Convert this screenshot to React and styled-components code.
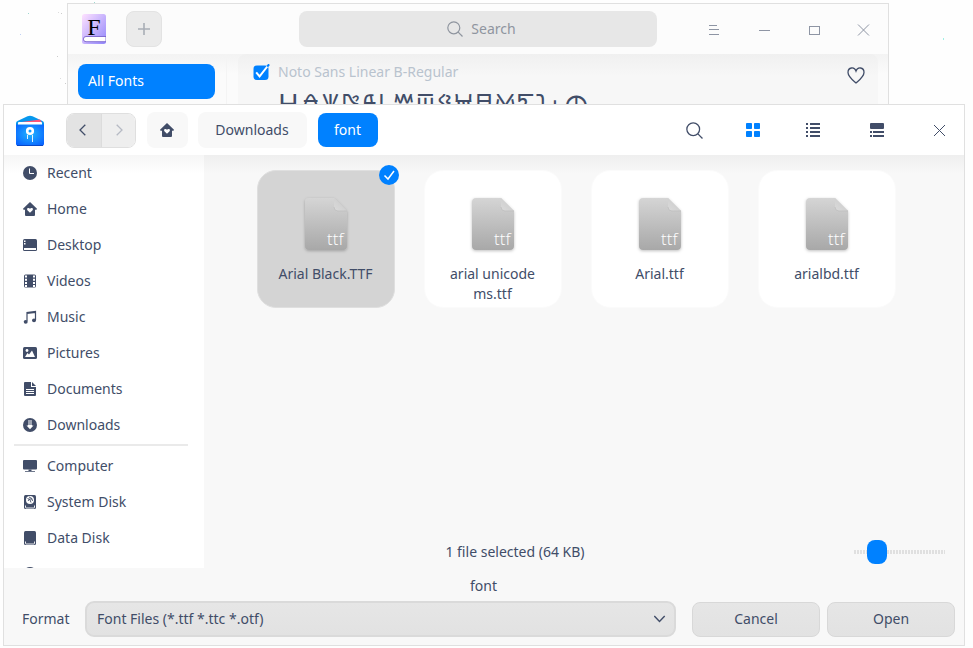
import React from "react";
import styled, { createGlobalStyle, css } from "styled-components";

const ink = "#414d68";
const blue = "#0081ff";

const GlobalStyle = createGlobalStyle`
  * { box-sizing: border-box; }
  body { margin: 0; background: #fff; overflow: hidden; }
  button { font: inherit; color: inherit; border: 0; padding: 0; background: none; }
  svg { display: block; flex: none; }
`;

const Desktop = styled.div`
  position: relative;
  width: 973px;
  height: 648px;
  overflow: hidden;
  background: #fefefe;
  font: 14px/20px "Noto Sans", "Open Sans", sans-serif;
  color: ${ink};
`;

const Specks = styled.svg`
  position: absolute;
  inset: 0;
`;

const Window = styled.section`
  position: absolute;
  display: flex;
  flex-direction: column;
  border: 1px solid #e0e0e0;
`;

const ManagerWindow = styled(Window)`
  left: 67px;
  top: 3px;
  width: 822px;
  height: 200px;
  background: #fbfbfb;
`;

const ManagerBar = styled.header`
  display: flex;
  align-items: center;
  height: 50px;
  padding: 0 16px 0 14px;
  background: #fcfcfc;
`;

const AddButton = styled.button`
  display: grid;
  place-items: center;
  width: 36px;
  height: 36px;
  margin-left: 20px;
  border: 1px solid #e3e3e3;
  border-radius: 8px;
  background: #ebebeb;
`;

const SearchBox = styled.div`
  display: flex;
  align-items: center;
  justify-content: center;
  gap: 8px;
  width: 358px;
  height: 36px;
  margin-left: 137px;
  padding-left: 7px;
  border-radius: 8px;
  background: #e7e7e7;
  color: #8f959f;
`;

const WindowControls = styled.div`
  display: flex;
  gap: 34px;
  margin: 2px 0 0 auto;
`;

const ManagerBody = styled.div`
  display: flex;
  flex: 1;
  min-height: 0;
  background: linear-gradient(#f3f3f3, #fbfbfb 20px);
`;

const ManagerNav = styled.nav`
  width: 159px;
  padding: 10px 11px 0 10px;
  border-right: 1px solid #f4f4f4;
`;

const NavItem = styled.div`
  height: 35px;
  padding: 0 10px;
  border-radius: 8px;
  background: ${blue};
  color: #fff;
  line-height: 34px;
`;

const FontList = styled.div`
  flex: 1;
  margin: 0 10px 0 11px;
  padding: 8px 13px 0 15px;
  border-radius: 8px;
  background: linear-gradient(#f0f0f0, #f7f7f7 22px);
`;

const FontHeading = styled.div`
  display: flex;
  align-items: center;
  gap: 8px;
  height: 20px;
  color: #b9c3ce;
  svg:last-child { margin: 7px 0 0 auto; }
`;

const Specimen = styled.div`
  height: 40px;
  margin-top: 12px;
  padding-left: 25px;
  overflow: hidden;
  font-size: 30px;
  line-height: 25px;
  white-space: nowrap;
`;

const SpecimenLead = styled.span`
  position: relative;
  top: -4px;
  margin-right: 1px;
  font-size: 28px;
`;

const DialogWindow = styled(Window)`
  left: 3px;
  top: 104px;
  width: 962px;
  height: 542px;
  background: #f8f8f8;
`;

const Toolbar = styled.header`
  display: flex;
  align-items: center;
  height: 50px;
  padding: 0 18px 0 12px;
  background: #fff;
`;

const HistoryButtons = styled.div`
  display: flex;
  width: 70px;
  height: 35px;
  margin-left: 22px;
  border: 1px solid #dfdfdf;
  border-radius: 8px;
  overflow: hidden;
`;

const HistoryButton = styled.button`
  display: grid;
  place-items: center;
  width: 34px;
  padding-right: 3px;
  background: ${(p) => (p.$active ? "#e3e3e3" : "#eeeeee")};
  & + & { border-left: 1px solid #dcdcdc; padding: 0 0 0 1px; }
`;

const Crumb = styled.button`
  display: grid;
  place-items: center;
  width: ${(p) => p.$width}px;
  height: 36px;
  margin-left: ${(p) => p.$gap}px;
  padding-right: 1px;
  border-radius: 8px;
  background: #f8f8f8;
  ${(p) =>
    p.$current &&
    css`
      height: 34px;
      background: ${blue};
      color: #fff;
    `}
`;

const ViewButtons = styled.div`
  display: flex;
  align-items: center;
  margin-left: auto;
`;

const ViewButton = styled.button`
  margin-left: ${(p) => p.$gap || 0}px;
`;

const Content = styled.div`
  display: flex;
  height: 413px;
`;

const Sidebar = styled.nav`
  width: 200px;
  height: 413px;
  overflow: hidden;
  background: linear-gradient(#f6f6f6, #fff 18px);
`;

const Place = styled.div`
  display: flex;
  align-items: center;
  gap: 10px;
  height: 36px;
  padding-left: 19px;
`;

const Divider = styled.hr`
  height: 2px;
  margin: 1px 16px 2px 10px;
  border: 0;
  background: #eaeaea;
`;

const Main = styled.main`
  display: flex;
  flex-direction: column;
  flex: 1;
  background: linear-gradient(#efefef, #f8f8f8 18px);
`;

const FileGrid = styled.div`
  display: grid;
  grid-template-columns: repeat(4, 138px);
  gap: 29px;
  padding: 15px 0 0 53px;
`;

const FileCard = styled.div`
  position: relative;
  display: flex;
  flex-direction: column;
  align-items: center;
  height: 138px;
  padding: 20px 20px 0;
  border: 1px solid ${(p) => (p.$selected ? "#dfdfdf" : "#fbfbfb")};
  border-radius: 19px;
  background: ${(p) => (p.$selected ? "#d4d4d4" : "#fff")};
  text-align: center;
`;

const FileName = styled.div`
  margin: 7px -4px 0;
  padding-right: 1px;
`;

const SelectedBadge = styled.div`
  position: absolute;
  top: -6px;
  right: -5px;
`;

const StatusRow = styled.div`
  display: flex;
  align-items: center;
  height: 32px;
  margin-top: auto;
  padding-right: 19px;
`;

const StatusText = styled.div`
  flex: 1;
  padding-right: 27px;
  text-align: center;
`;

const ZoomSlider = styled.div`
  display: flex;
  align-items: center;
  width: 92px;
  height: 24px;
  padding-left: 14px;
  background: repeating-linear-gradient(90deg, #e0e0e0 0 2px, #f8f8f8 2px 3px) 1px 10px / 91px 4px no-repeat;
`;

const ZoomHandle = styled.div`
  width: 20px;
  height: 24px;
  border-radius: 8px;
  background: ${blue};
`;

const FolderName = styled.div`
  height: 33px;
  padding: 8px 1px 0 0;
  text-align: center;
`;

const Footer = styled.footer`
  display: flex;
  align-items: center;
  height: 36px;
  padding: 0 9px 0 18px;
`;

const FormatLabel = styled.label`
  width: 63px;
`;

const FormatSelect = styled.div`
  display: flex;
  align-items: center;
  justify-content: space-between;
  width: 591px;
  height: 36px;
  padding: 0 8px 0 10px;
  border: 2px solid #dadada;
  border-radius: 9px;
  background: linear-gradient(#e6e6e6, #e2e2e2);
`;

const ActionButton = styled.button`
  width: 128px;
  height: 35px;
  margin-left: ${(p) => p.$gap}px;
  border: 1px solid #d8d8d8;
  border-radius: 8px;
  background: linear-gradient(#e6e6e6, #e2e2e2);
`;

const FontManagerLogo = () => (
  <svg width="24" height="30" viewBox="0 0 24 30">
    <defs>
      <linearGradient id="cover" x1="0" y1="0" x2="1" y2="1">
        <stop offset="0" stopColor="#ffe2ff" />
        <stop offset="1" stopColor="#9186fb" />
      </linearGradient>
    </defs>
    <rect width="24" height="30" rx="2.5" fill="url(#cover)" />
    <path d="M24 22.500H4a2.600 2.600 0 0 0 0 5.200h20z" fill="#fff" stroke="#6d56c7" strokeWidth=".8" />
    <text x="12" y="20.500" textAnchor="middle" fontFamily="Liberation Serif, serif" fontSize="24" fill="#000">F</text>
  </svg>
);

const FilesLogo = () => (
  <svg width="28" height="31" viewBox="0 0 28 31">
    <defs>
      <radialGradient id="drawer" cx=".5" cy=".45" r=".65">
        <stop offset="0" stopColor="#20b5ff" />
        <stop offset="1" stopColor="#0964ff" />
      </radialGradient>
    </defs>
    <path d="M0 8q0-1.500 2-2.300L11.500 1.200q2.500-1 5 0L26 5.700q2 .8 2 2.300v8H0z" fill="#0798ee" />
    <path d="M2 7.500 24 4.500l2 3.500z" fill="#ff5578" />
    <path d="M0 9.500h28V29q0 1.500-1.500 1.500h-25Q0 30.500 0 29z" fill="url(#drawer)" />
    <path d="M3 7h22q1 0 1 1v1.500H2V8q0-1 1-1z" fill="#fff" />
    <path d="M1 30.500h26" stroke="#0848c8" />
    <circle cx="14" cy="16" r="2.800" fill="#119cff" stroke="#fff" strokeWidth="2.600" />
    <path d="M11.500 20v4M16.500 20v7" stroke="#e2f4ff" />
  </svg>
);

const Stroke = ({ w, h = w, d, color = ink, width = 1, crisp }) => (
  <svg width={w} height={h} fill="none" stroke={color} strokeWidth={width} shapeRendering={crisp ? "crispEdges" : undefined}>
    <path d={d} />
  </svg>
);

const SearchIcon = ({ size, color, width }) => (
  <svg width={size} height={size} viewBox="0 0 16 16" fill="none" stroke={color} strokeWidth={width}>
    <circle cx="6.800" cy="6.800" r="6" />
    <path d="M11.200 11.200l4.300 4.300" />
  </svg>
);

const Tick = () => (
  <svg width="17" height="17" viewBox="0 0 17 17">
    <rect x=".5" y="1.500" width="15" height="14.500" rx="3.500" fill={blue} />
    <path d="M3.200 8.300l3.400 4L14.300 2.500" stroke="#fff" strokeWidth="2" fill="none" />
    <path d="M14.300 2.500l1.800-2.200" stroke={blue} strokeWidth="2" />
  </svg>
);

const icons = {
  clock: (
    <>
      <circle cx="7" cy="7" r="7" fill={ink} />
      <path d="M6.500 2.500v5H11" stroke="#fff" fill="none" />
    </>
  ),
  home: (
    <>
      <path d="M7 0l7 6.800-.5 1H12V13q0 1-1 1H3q-1 0-1-1V7.800H.500L0 6.800z" fill={ink} />
      <path d="M7 10.700L4.400 8.200q-.9-1.400.3-2.100 1.300-.6 2.300.7 1-1.300 2.300-.7 1.200.7.300 2.100z" fill="#fff" />
    </>
  ),
  desktop: (
    <>
      <rect y="1" width="14" height="12" rx="1.500" fill={ink} />
      <path d="M1 10h12v2H1zM1 2.500h1.500V4H1zM1 5h1.500v1.500H1z" fill="#fff" />
    </>
  ),
  video: (
    <>
      <rect x="1" y=".5" width="12" height="13" rx="1.500" fill={ink} />
      <path d="M3 1.500v12M11 1.500v12" stroke="#fff" strokeWidth="2" strokeDasharray="2 1.200" />
    </>
  ),
  music: (
    <>
      <path d="M4 11V2.500l8.500-1V10M4 3.300l8.500-1" stroke={ink} strokeWidth="1.200" fill="none" />
      <ellipse cx="2.700" cy="11.800" rx="2" ry="1.900" fill={ink} />
      <ellipse cx="11" cy="10.300" rx="2" ry="1.900" fill={ink} />
    </>
  ),
  picture: (
    <>
      <rect y="1" width="14" height="12" rx="1.500" fill={ink} />
      <circle cx="4" cy="4.500" r="1.400" fill="#fff" />
      <path d="M2 11l2.500-4L6 8.500 9 4.500l3 6.500z" fill="#fff" />
    </>
  ),
  document: (
    <>
      <path d="M2 0h6v5h5v8q0 1-1 1H2q-1 0-1-1V1q0-1 1-1zM9 0l4 4H9z" fill={ink} />
      <path d="M3 7.500h8M3 9.500h8M3 11.500h8" stroke="#fff" />
    </>
  ),
  download: (
    <>
      <circle cx="7" cy="7" r="7" fill={ink} />
      <path d="M5 2.500h4v1H5zM5 4.500h4v1H5zM5 6.500h4v1h1.500L7 11.200 3.500 7.500H5z" fill="#fff" />
    </>
  ),
  computer: (
    <>
      <rect y="1" width="14" height="9.500" rx="1" fill={ink} />
      <path d="M5.500 10.500h3V12H12v.8H2V12h3.500z" fill={ink} />
    </>
  ),
  system: (
    <>
      <rect x="1" width="12" height="14" rx="1.500" fill={ink} />
      <circle cx="7" cy="5" r="4" fill="#fff" />
      <path d="M4.500 3.500q3 0 3.500 4M6 2q4 1 3.500 4M5 6q1-3 4-2" stroke={ink} fill="none" strokeWidth=".9" />
      <path d="M2.500 10.500v2q0 .5.500.5h8q.5 0 .5-.5v-2" stroke="#fff" strokeWidth=".9" fill="none" />
    </>
  ),
  disk: (
    <>
      <rect x="1" width="12" height="14" rx="1.500" fill={ink} />
      <path d="M2.500 10.500v2q0 .5.500.5h8q.5 0 .5-.5v-2" stroke="#fff" strokeWidth=".9" fill="none" />
    </>
  ),
};

const Icon = ({ name }) => (
  <svg width="14" height="14" viewBox="0 0 14 14">{icons[name]}</svg>
);

const TtfFile = () => (
  <svg width="56" height="66" viewBox="0 0 56 66">
    <defs>
      <linearGradient id="paper" x1="0" y1="0" x2="0" y2="1">
        <stop offset="0" stopColor="#d5d5d5" />
        <stop offset="1" stopColor="#a8a8a8" />
      </linearGradient>
      <linearGradient id="fold" x1="0" y1="1" x2="1" y2="0">
        <stop offset="0" stopColor="#dadada" />
        <stop offset="1" stopColor="#c9c9c9" />
      </linearGradient>
      <filter id="lift" x="-20%" y="-20%" width="140%" height="140%">
        <feDropShadow dx="0" dy="1" stdDeviation="1.500" floodOpacity=".25" />
      </filter>
    </defs>
    <g transform="translate(7 7)">
      <path d="M4 0h25l13 13v35q0 4-4 4H4q-4 0-4-4V4q0-4 4-4z" fill="url(#paper)" filter="url(#lift)" />
      <path d="M29 0l13 13h-9q-4 0-4-4z" fill="url(#fold)" />
      <path d="M29 9q0 4 4 4h9" stroke="#bcbcbc" strokeWidth=".7" fill="none" />
      <text x="38.500" y="47" textAnchor="end" fontFamily="Open Sans, Noto Sans, sans-serif" fontWeight="300" fontSize="17" fill="#fff">ttf</text>
    </g>
  </svg>
);

const places = [
  ["clock", "Recent"], ["home", "Home"], ["desktop", "Desktop"], ["video", "Videos"],
  ["music", "Music"], ["picture", "Pictures"], ["document", "Documents"], ["download", "Downloads"],
];
const drives = [["computer", "Computer"], ["system", "System Disk"], ["disk", "Data Disk"], ["clock", ""]];
const files = ["Arial Black.TTF", "arial unicode ms.ttf", "Arial.ttf", "arialbd.ttf"];

const specks = [
  [28, 13, "#9fd8d0"], [20, 34, "#c0d0f5"], [58, 12, "#ddd"], [61, 13, "#ccc"], [57, 56, "#ccc"],
  [60, 78, "#ddd"], [65, 83, "#ccc"], [94, 2, "#9fd8d0"], [943, 38, "#9ff0e4"], [943, 39, "#9ff0e4"],
];

export default function App() {
  return (
    <Desktop>
      <GlobalStyle />
      <Specks width="973" height="648">
        {specks.map(([x, y, fill]) => <rect key={`${x}-${y}`} x={x} y={y} width="1" height="1" fill={fill} />)}
      </Specks>

      <ManagerWindow>
        <ManagerBar>
          <FontManagerLogo />
          <AddButton aria-label="Add font"><Stroke w={12} d="M6 0v12M0 6h12" color="#a9aeb6" width={1.6} /></AddButton>
          <SearchBox><SearchIcon size={16} color="#8f959f" width={1.2} />Search</SearchBox>
          <WindowControls>
            <Stroke w={16} d="M3 3.500h8M3 7.500h10M3 12.500h10" color="#8e95a4" crisp />
            <Stroke w={16} d="M3 8.500h11" color="#8e95a4" crisp />
            <Stroke w={16} d="M3.500 4.500h10v8h-10z" color="#8e95a4" crisp />
            <Stroke w={16} d="M2 2.500l11 11M13 2.500l-11 11" color="#8e95a4" />
          </WindowControls>
        </ManagerBar>
        <ManagerBody>
          <ManagerNav><NavItem>All Fonts</NavItem></ManagerNav>
          <FontList>
            <FontHeading>
              <Tick />
              Noto Sans Linear B-Regular
              <Stroke w={18} h={17} width={1.3} d="M9 16C5 12.500 1 9.500 1 5.500 1 0 7.500-.5 9 4c1.500-4.500 8-4 8 1.500C17 9.500 13 12.500 9 16z" />
            </FontHeading>
            <Specimen><SpecimenLead>H</SpecimenLead>𐀁𐀂𐀃𐀄𐀅𐀆𐀇𐀈𐀉𐀊𐀋𐀍𐀎𐀏</Specimen>
          </FontList>
        </ManagerBody>
      </ManagerWindow>

      <DialogWindow>
        <Toolbar>
          <FilesLogo />
          <HistoryButtons>
            <HistoryButton $active aria-label="Back"><Stroke w={7} h={12} d="M6.300.8L1 6l5.300 5.200" width={1.3} /></HistoryButton>
            <HistoryButton aria-label="Forward"><Stroke w={7} h={12} d="M.7.8L6 6 .7 11.200" color="#b6bac4" width={1.3} /></HistoryButton>
          </HistoryButtons>
          <Crumb $width={41} $gap={11} aria-label="Home"><Icon name="home" /></Crumb>
          <Crumb $width={109} $gap={10}>Downloads</Crumb>
          <Crumb $width={60} $gap={11} $current>font</Crumb>
          <ViewButtons>
            <ViewButton aria-label="Search"><SearchIcon size={17} color={ink} width={1.2} /></ViewButton>
            <ViewButton $gap={43} aria-label="Icon view">
              <svg width="14" height="14" fill={blue}>
                <rect width="6" height="6" rx=".8" /><rect x="8" width="6" height="6" rx=".8" />
                <rect y="8" width="6" height="6" rx=".8" /><rect x="8" y="8" width="6" height="6" rx=".8" />
              </svg>
            </ViewButton>
            <ViewButton $gap={46} aria-label="List view">
              <svg width="14" height="14" fill={ink} shapeRendering="crispEdges">
                <path d="M0 0h2v2H0zM4 0h10v2H4zM0 4h2v2H0zM4 4h10v2H4zM0 8h2v2H0zM4 8h10v2H4zM0 12h2v2H0zM4 12h10v2H4z" />
              </svg>
            </ViewButton>
            <ViewButton $gap={50} aria-label="Group view">
              <svg width="14" height="14" fill={ink}>
                <rect width="14" height="6" rx="1" /><path d="M0 8h2v2H0zM3 8h11v2H3zM0 12h2v2H0zM3 12h11v2H3z" />
              </svg>
            </ViewButton>
            <ViewButton $gap={50} aria-label="Close"><Stroke w={12} d="M0 1l11 11M11 1l-11 11" /></ViewButton>
          </ViewButtons>
        </Toolbar>
        <Content>
          <Sidebar>
            {places.map(([icon, label]) => <Place key={label}><Icon name={icon} />{label}</Place>)}
            <Divider />
            {drives.map(([icon, label]) => <Place key={label}><Icon name={icon} />{label}</Place>)}
          </Sidebar>
          <Main>
            <FileGrid>
              {files.map((name, i) => (
                <FileCard key={name} $selected={i === 0}>
                  <TtfFile />
                  <FileName>{name}</FileName>
                  {i === 0 && (
                    <SelectedBadge>
                      <svg width="20" height="20"><circle cx="10" cy="10" r="10" fill={blue} /><path d="M5.500 10.500l3.500 3.500 6-8" stroke="#fff" strokeWidth="1.500" fill="none" /></svg>
                    </SelectedBadge>
                  )}
                </FileCard>
              ))}
            </FileGrid>
            <StatusRow>
              <StatusText>1 file selected (64 KB)</StatusText>
              <ZoomSlider><ZoomHandle /></ZoomSlider>
            </StatusRow>
          </Main>
        </Content>
        <FolderName>font</FolderName>
        <Footer>
          <FormatLabel>Format</FormatLabel>
          <FormatSelect>Font Files (*.ttf *.ttc *.otf)<Stroke w={12} h={8} d="M.3 1L5.500 6.500 10.700 1" width={1.4} /></FormatSelect>
          <ActionButton $gap={16}>Cancel</ActionButton>
          <ActionButton $gap={7}>Open</ActionButton>
        </Footer>
      </DialogWindow>
    </Desktop>
  );
}
